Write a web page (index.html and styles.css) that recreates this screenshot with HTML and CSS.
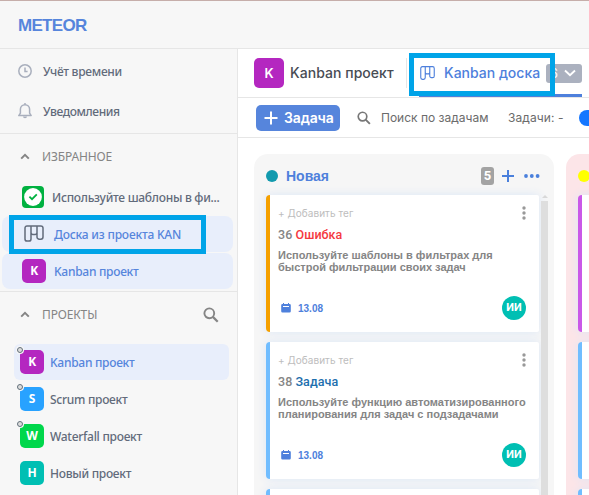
FILE: index.html
```html
<!DOCTYPE html>
<html lang="ru">
<head>
<meta charset="utf-8">
<title>Meteor</title>
<link rel="stylesheet" href="styles.css">
</head>
<body>
<svg class="defs" width="0" height="0">
  <symbol id="board" viewBox="0 0 20 17" preserveAspectRatio="none"><path d="M3 .9H16.800A2.200 2.200 0 0 1 19 3.100V12A2.200 2.200 0 0 1 16.800 14.200H15.200A2.200 2.200 0 0 1 13 12V.9M13 7.500A2 2 0 0 1 11 9.500H9A2 2 0 0 1 7 7.500M7 .9V14A2.100 2.100 0 0 1 4.900 16.100H3.100A2.100 2.100 0 0 1 1 14V2.900A2 2 0 0 1 3 .9Z" fill="none" stroke="currentColor" stroke-width="1.500"/></symbol>
  <symbol id="search" viewBox="0 0 16 16"><circle cx="6.300" cy="6.300" r="4.900" fill="none" stroke="currentColor" stroke-width="1.900"/><path d="M9.900 9.900L14.700 14.700" stroke="currentColor" stroke-width="2.200"/></symbol>
  <symbol id="chevron" viewBox="0 0 10 7"><path d="M1.200 5.600L5 1.800L8.800 5.600" fill="none" stroke="currentColor" stroke-width="2"/></symbol>
  <symbol id="calendar" viewBox="0 0 10 10"><path d="M1.500 1H2V0H3V1H7V0H8V1H8.500A1.300 1.300 0 0 1 9.800 2.300V8.300A1.300 1.300 0 0 1 8.500 9.600H1.500A1.300 1.300 0 0 1 .2 8.300V2.300A1.300 1.300 0 0 1 1.500 1Z" fill="currentColor"/><path d="M2 3.500H8" stroke="#fff" stroke-width="1"/></symbol>
  <symbol id="kebab" viewBox="0 0 4 14"><g fill="#999"><circle cx="2" cy="2" r="1.700"/><circle cx="2" cy="7" r="1.700"/><circle cx="2" cy="12" r="1.700"/></g></symbol>
</svg>

<header class="topbar"><span class="brand">METEOR</span></header>
<div class="layout">
  <aside class="sidebar">
    <nav class="quick">
      <div class="quick-item">
        <svg width="14" height="14" viewBox="0 0 14 14"><g fill="none" stroke="#a9afbd" stroke-width="1.500"><circle cx="7" cy="7" r="6.200"/><path d="M7 3.600V7.400H9.600"/></g></svg>
        <span class="time-label">Учёт времени</span>
      </div>
      <div class="quick-item">
        <svg width="14" height="16" viewBox="0 0 14 16"><path d="M.8 12.600H13.200L11.600 10.200V6.300A4.600 4.600 0 0 0 2.400 6.300V10.200ZM7 0V2" fill="none" stroke="#a9afbd" stroke-width="1.500" stroke-linejoin="round"/><path d="M5 13.500H9A2 1.700 0 0 1 5 13.500Z" fill="#a9afbd"/></svg>
        <span class="notice-label">Уведомления</span>
      </div>
    </nav>
    <section class="favorites">
      <div class="section-title"><svg width="10" height="7"><use href="#chevron"/></svg><span>ИЗБРАННОЕ</span></div>
      <div class="fav first">
        <span class="check"><svg width="22" height="22" viewBox="0 0 22 22"><circle cx="11" cy="11" r="8.900" fill="#fff"/><path d="M7.400 10.700L10 13.200L14.800 8.400" fill="none" stroke="#00b140" stroke-width="1.800"/></svg></span>
        <span class="fav-long">Используйте шаблоны в фи...</span>
      </div>
      <div class="fav active"><svg class="fav-board" width="20" height="17"><use href="#board"/></svg><span class="fav-boardname">Доска из проекта KAN</span><i class="highlight"></i></div>
      <div class="fav active"><b class="avatar purple">K</b><span class="fav-name">Kanban проект</span></div>
    </section>
    <section class="projects">
      <div class="section-title"><svg width="10" height="7"><use href="#chevron"/></svg><span class="projects-label">ПРОЕКТЫ</span><svg class="find" width="16" height="16"><use href="#search"/></svg></div>
      <div class="project active"><b class="avatar purple">K<i class="status"></i></b><span>Kanban проект</span></div>
      <div class="project"><b class="avatar blue">S<i class="status"></i></b><span>Scrum проект</span></div>
      <div class="project"><b class="avatar green">W<i class="status"></i></b><span>Waterfall проект</span></div>
      <div class="project"><b class="avatar teal">Н</b><span>Новый проект</span></div>
    </section>
  </aside>

  <main class="main">
    <div class="project-bar">
      <b class="project-logo">K</b>
      <span class="project-title">Kanban проект</span>
      <div class="tab">
        <svg width="15" height="14"><use href="#board"/></svg>
        <span class="tab-name">Kanban доска</span>
        <span class="tab-count">6<svg width="12" height="8" viewBox="0 0 12 8"><path d="M1 1.500L6 6.200L11 1.500" fill="none" stroke="#fff" stroke-width="1.900"/></svg></span>
        <i class="tab-highlight"></i>
      </div>
    </div>
    <div class="toolbar">
      <div class="create"><svg width="14" height="14" viewBox="0 0 14 14"><path d="M7 .5V13.500M.5 7H13.500" stroke="#fff" stroke-width="2"/></svg><span>Задача</span></div>
      <svg class="tool-search" width="14" height="14"><use href="#search"/></svg>
      <span class="search-label">Поиск по задачам</span>
      <span class="tasks-label">Задачи: -</span>
      <i class="switch"></i>
    </div>
    <div class="board">
      <section class="column">
        <div class="column-head">
          <i class="dot"></i><b class="column-name">Новая</b><b class="count">5</b>
          <svg class="plus" width="12" height="12" viewBox="0 0 12 12"><path d="M6 0V12M0 6H12" stroke="#4a80dc" stroke-width="2"/></svg>
          <svg class="more" width="16" height="4" viewBox="0 0 16 4"><g fill="#4a80dc"><circle cx="2" cy="2" r="1.900"/><circle cx="7.800" cy="2" r="1.900"/><circle cx="13.600" cy="2" r="1.900"/></g></svg>
        </div>
        <div class="column-body">
          <div class="cards">
            <article class="card orange">
              <div class="tag-row"><span>+ Добавить тег</span><svg width="4" height="14"><use href="#kebab"/></svg></div>
              <div class="kind">36 <span class="bug">Ошибка</span></div>
              <div class="desc"><div class="d1">Используйте шаблоны в фильтрах для</div><div class="d2">быстрой фильтрации своих задач</div></div>
              <div class="card-foot"><svg width="10" height="10"><use href="#calendar"/></svg><b class="date">13.08</b><b class="user">ИИ</b></div>
            </article>
            <article class="card sky">
              <div class="tag-row"><span>+ Добавить тег</span><svg width="4" height="14"><use href="#kebab"/></svg></div>
              <div class="kind">38 <span class="task">Задача</span></div>
              <div class="desc"><div class="d3">Используйте функцию автоматизированного</div><div class="d4">планирования для задач с подзадачами</div></div>
              <div class="card-foot"><svg width="10" height="10"><use href="#calendar"/></svg><b class="date">13.08</b><b class="user">ИИ</b></div>
            </article>
            <article class="card sky"></article>
          </div>
          <div class="scrollbar"><i class="arrow"></i><i class="thumb"></i></div>
        </div>
      </section>
      <section class="column pink">
        <div class="column-head"><i class="dot yellow"></i></div>
        <div class="column-body"><div class="cards">
          <article class="card violet"></article>
          <article class="card sky"></article>
          <article class="card sky"></article>
        </div></div>
      </section>
    </div>
  </main>
</div>
</body>
</html>
```

FILE: styles.css
```css
* { box-sizing: border-box; }
body { margin: 0; width: 589px; height: 495px; overflow: hidden; background: #f7f7f7; font-family: "Noto Sans", sans-serif; font-size: 12px; color: #626b7b; display: flex; flex-direction: column; }
svg { flex: none; display: block; }
.defs { display: none; }
span, b { white-space: nowrap; }

.topbar { flex: none; height: 49px; border-top: 1px solid #c6aeaa; border-bottom: 1px solid #e6e6e6; padding-left: 18px; display: flex; align-items: center; }
.brand { font: bold 17px/20px "Liberation Sans", sans-serif; color: #5685dc; letter-spacing: -0.700px; margin-top: 2px; }
.layout { flex: 1; display: flex; min-height: 0; }

.sidebar { flex: none; width: 238px; border-right: 1px solid #e6e6e6; font-weight: 500; letter-spacing: -0.280px; }
.quick { height: 85px; border-bottom: 1px solid #e6e6e6; padding: 2px 0 0 18px; }
.quick-item { height: 40px; display: flex; align-items: center; gap: 11px; }
.notice-label { letter-spacing: -0.400px; }
.section-title { display: flex; align-items: center; gap: 12px; padding-left: 20px; height: 45px; color: #858585; font-weight: 400; font-size: 12px; letter-spacing: -0.150px; }
.favorites { height: 158px; border-bottom: 1px solid #e6e6e6; }
.favorites .section-title { margin-bottom: 1px; }
.fav { position: relative; height: 36px; margin: 0 4px 1px 2px; padding-left: 20px; border-radius: 8px; display: flex; align-items: center; }
.fav.active { background: #e8eefb; color: #5685dc; }
.fav.first { height: 35px; padding-bottom: 1px; }
.fav-boardname { letter-spacing: -0.200px; }
.check { width: 22px; height: 22px; border-radius: 4px; background: #00b140; margin-right: 8px; }
.fav-board { color: #626b7b; margin: -2px 10px 0 2px; }
.highlight { position: absolute; left: 7px; top: -1px; width: 197px; height: 39px; border: 5px solid #00a4e8; z-index: 2; }
.avatar { position: relative; flex: none; width: 24px; height: 24px; border-radius: 5px; color: #fff; display: flex; align-items: center; justify-content: center; font: bold 12px/24px "Noto Sans", sans-serif; }
.fav .avatar { margin-right: 8px; }
.purple { background: #b427c0; }
.blue { background: #28a2ff; }
.green { background: #00d74b; }
.teal { background: #00bfb3; }
.projects-label { flex: 1; }
.find { color: #858585; margin-right: 18px; }
.projects .section-title { height: 45px; margin-bottom: 7px; }
.project { height: 36px; margin: 0 8px 1px 14px; padding-left: 6px; display: flex; align-items: center; gap: 6px; border-radius: 6px; }
.project.active { background: #e8eefb; color: #5685dc; }
.status { position: absolute; left: -3px; top: -3px; width: 6px; height: 6px; border: 1px solid #63707b; border-radius: 50%; background: #ddd; box-shadow: 0 0 0 1px #f7f7f7; }

.main { flex: 1; min-width: 0; background: #fff; font-family: Inter, sans-serif; overflow: hidden; }
.project-bar { height: 49px; border-bottom: 1px solid #e6e6e6; display: flex; align-items: center; padding-left: 16px; }
.project-logo { width: 30px; height: 30px; border-radius: 5px; background: #b427c0; color: #fff; font: 600 13px/30px Inter, sans-serif; text-align: center; }
.project-title { width: 116px; margin: -1px 0 0 6px; font-weight: 500; font-size: 14px; color: #484c54; letter-spacing: 0.050px; }
.tab { position: relative; align-self: stretch; width: 163px; margin-left: 13px; border-bottom: 3px solid #4e80dc; border-radius: 0 2px 0 0; display: flex; align-items: center; color: #4e80dc; padding: 3px 0 0 1px; }
.tab::before { content: ""; position: absolute; left: -13px; top: 9px; width: 1px; height: 30px; background: #e6e6e6; }
.tab-name { width: 102px; margin: -1px 0 0 9px; font-size: 14px; font-weight: 500; }
.tab-count { width: 36px; height: 19px; border-radius: 3px; background: #abb1bf; color: #fff; display: flex; align-items: center; justify-content: space-between; padding: 0 6px 0 4px; font-size: 13px; }
.tab-highlight { position: absolute; left: -10px; top: 4px; width: 146px; height: 43px; border: 5px solid #00a4e8; }
.toolbar { height: 40px; border-bottom: 1px solid #e6e6e6; display: flex; align-items: center; padding-left: 18px; color: #6b6b6b; white-space: nowrap; }
.create { flex: none; width: 84px; height: 26px; border-radius: 5px; background: #5685dc; color: #fff; display: flex; align-items: center; padding-left: 8px; gap: 6px; font-weight: 600; font-size: 14px; letter-spacing: -0.150px; }
.tool-search { margin: 0 10px 0 17px; color: #777; }
.search-label { width: 127px; flex: none; }
.tasks-label { width: 71px; flex: none; letter-spacing: 0.100px; }
.switch { flex: none; width: 28px; height: 16px; border-radius: 8px; background: #1677ff; }

.board { height: 357px; padding: 16px 0 0 16px; display: flex; gap: 12px; overflow: hidden; }
.column { flex: none; width: 300px; height: 360px; border-radius: 14px 14px 0 0; background: #f6f6f6; }
.column.pink { background: #fce5e8; }
.column-head { height: 36px; padding: 8px 14px 0 12px; display: flex; align-items: center; }
.dot { width: 12px; height: 12px; border-radius: 50%; background: #129aae; }
.dot.yellow { background: #ff0; }
.column-name { flex: 1; margin-left: 8px; color: #4e80dc; font: bold 14px/18px "Liberation Sans", sans-serif; }
.count { width: 13px; height: 18px; border-radius: 3px; background: #a3a3a3; color: #fff; text-align: center; font: bold 13px/18px Roboto, sans-serif; }
.plus { margin: 0 10px 0 8px; }
.column-body { display: flex; gap: 2px; padding-left: 12px; height: 324px; }
.cards { width: 273px; padding-top: 5px; display: flex; flex-direction: column; gap: 10px; }
.card { flex: none; height: 137px; border-radius: 4px 2px 2px 4px; border-left: 4px solid; background: #fff; box-shadow: 0 0 10px #dbe6f6; padding: 11px 13px 0 8px; font-family: "Liberation Sans", sans-serif; color: #858585; }
.orange { border-left-color: #f5a000; }
.sky { border-left-color: #70bdff; }
.violet { border-left-color: #ca58e8; }
.tag-row { height: 14px; display: flex; justify-content: space-between; align-items: center; color: #bdbdbd; font: 10px/14px Inter, sans-serif; letter-spacing: 0.050px; }
.kind { margin-top: 6px; font: 500 12.500px/18px Roboto, sans-serif; letter-spacing: 0.050px; }
.bug { color: #f5393f; }
.task { color: #1d6fae; }
.desc { height: 24px; margin-top: 5px; font-weight: bold; font-size: 11px; line-height: 12px; white-space: nowrap; }
.desc div { width: max-content; }
.card-foot { height: 24px; margin-top: 23px; display: flex; align-items: center; padding-left: 3px; color: #4e80dc; }
.date { flex: 1; margin-left: 7px; font-size: 10px; }
.user { width: 24px; height: 24px; border-radius: 50%; background: #00bfb3; color: #fff; text-align: center; font: bold 11px/24px Roboto, sans-serif; }
.scrollbar { width: 7px; display: flex; flex-direction: column; align-items: center; padding-top: 5px; }
.arrow { border: 3px solid transparent; border-top: 0; border-bottom-color: #d8d8d8; margin-bottom: 3px; }
.thumb { width: 7px; flex: 1; background: #dedede; }
```
